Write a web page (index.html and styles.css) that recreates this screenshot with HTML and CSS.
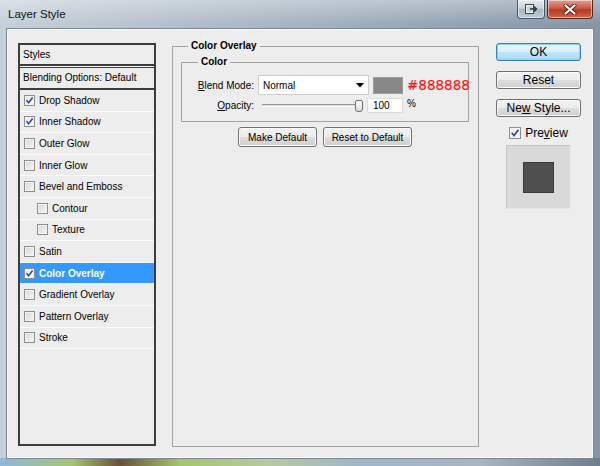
FILE: index.html
```html
<!DOCTYPE html>
<html lang="en">
<head>
    <meta charset="UTF-8">
    <title>Layer Style</title>
    <link rel="stylesheet" href="styles.css">
</head>
<body>
    <div class="window">
        <div class="title_bar">
            <div class="title">Layer Style</div>
            <div class="title_buttons">
                <div class="tb_btn">
                    <svg width="13" height="10" viewBox="0 0 13 10">
                        <rect x="0.5" y="0.5" width="8" height="9" fill="#f4f6f8" stroke="#3b4652"/>
                        <rect x="2" y="2" width="5" height="6" fill="#c9d1d9"/>
                        <path d="M5 5 H11.5 M9 2.5 L11.5 5 L9 7.5" fill="none" stroke="#2b333c" stroke-width="1.4"/>
                    </svg>
                </div>
                <div class="tb_btn tb_close">
                    <svg width="14" height="11" viewBox="0 0 14 11">
                        <path d="M2.5 1.5 L11.5 9.5 M11.5 1.5 L2.5 9.5" stroke="#5a1d12" stroke-width="4" stroke-linecap="round"/>
                        <path d="M2.5 1.5 L11.5 9.5 M11.5 1.5 L2.5 9.5" stroke="#ffffff" stroke-width="2.2" stroke-linecap="round"/>
                    </svg>
                </div>
            </div>
        </div>

        <div class="client">
            <div class="style_list">
                <div class="list_head">Styles</div>
                <div class="list_blend">Blending Options: Default</div>
                <div class="list_row"><span class="check on"><svg width="9" height="9" viewBox="0 0 9 9"><path d="M1.5 4.3 L3.6 6.8 L7.6 1.6" fill="none" stroke="#2b4c9b" stroke-width="1.6"/></svg></span>Drop Shadow</div>
                <div class="list_row"><span class="check on"><svg width="9" height="9" viewBox="0 0 9 9"><path d="M1.5 4.3 L3.6 6.8 L7.6 1.6" fill="none" stroke="#2b4c9b" stroke-width="1.6"/></svg></span>Inner Shadow</div>
                <div class="list_row"><span class="check"></span>Outer Glow</div>
                <div class="list_row"><span class="check"></span>Inner Glow</div>
                <div class="list_row"><span class="check"></span>Bevel and Emboss</div>
                <div class="list_row sub"><span class="check"></span>Contour</div>
                <div class="list_row sub"><span class="check"></span>Texture</div>
                <div class="list_row"><span class="check"></span>Satin</div>
                <div class="list_row selected"><span class="check on"><svg width="9" height="9" viewBox="0 0 9 9"><path d="M1.5 4.3 L3.6 6.8 L7.6 1.6" fill="none" stroke="#2b4c9b" stroke-width="1.6"/></svg></span>Color Overlay</div>
                <div class="list_row"><span class="check"></span>Gradient Overlay</div>
                <div class="list_row"><span class="check"></span>Pattern Overlay</div>
                <div class="list_row"><span class="check"></span>Stroke</div>
            </div>

            <fieldset class="group outer">
                <legend>Color Overlay</legend>
                <fieldset class="group inner">
                    <legend class="inner_legend">Color</legend>
                    <div class="field_row">
                        <div class="field_label"><u>B</u>lend Mode:</div>
                        <div class="select">
                            <span>Normal</span>
                            <svg width="8" height="5" viewBox="0 0 8 5"><path d="M0 0 H8 L4 4.5 Z" fill="#000"/></svg>
                        </div>
                        <div class="swatch"></div>
                        <div class="hex">#888888</div>
                    </div>
                    <div class="field_row second">
                        <div class="field_label"><u>O</u>pacity:</div>
                        <div class="slider">
                            <div class="track"></div>
                            <div class="thumb"></div>
                        </div>
                        <div class="num_input">100</div>
                        <div class="percent">%</div>
                    </div>
                </fieldset>
                <div class="default_buttons">
                    <div class="btn small make">Make Default</div>
                    <div class="btn small reset_def">Reset to Default</div>
                </div>
            </fieldset>

            <div class="side">
                <div class="btn big ok">OK</div>
                <div class="btn big">Reset</div>
                <div class="btn big"><span>Ne<u>w</u> Style...</span></div>
                <div class="preview_row">
                    <span class="check on big_check"><svg width="10" height="10" viewBox="0 0 9 9"><path d="M1.5 4.3 L3.6 6.8 L7.6 1.6" fill="none" stroke="#2b4c9b" stroke-width="1.5"/></svg></span>
                    <span>Pre<u>v</u>iew</span>
                </div>
                <div class="preview_box">
                    <div class="preview_square"></div>
                </div>
            </div>
        </div>
    </div>
</body>
</html>
```

FILE: styles.css
```css
* {
    box-sizing: border-box;
}

body {
    margin: 0;
    font-family: "Liberation Sans", Arial, sans-serif;
    font-size: 10px;
    color: #000;
}

u {
    text-decoration: underline;
    text-underline-offset: 1px;
}

.window {
    width: 600px;
    height: 466px;
    display: flex;
    flex-direction: column;
    background:
        linear-gradient(to bottom, rgba(255, 255, 255, 0.35), rgba(255, 255, 255, 0) 24px),
        linear-gradient(to right, #8fb7dc 0%, #a7c56f 12%, #6a5038 20%, #a5c66c 30%, #b7c9a0 45%, #9fb6cc 60%, #a9b5c1 80%, #6f7e8d 100%) bottom / 100% 8px no-repeat,
        linear-gradient(to right, #c6d0da, #a9b6c3 45%, #8595a6);
}

.title_bar {
    height: 29px;
    display: flex;
    padding-left: 8px;
}

.title {
    font-size: 11.5px;
    line-height: 29px;
    color: #111;
}

.title_buttons {
    margin-left: auto;
    margin-right: 7px;
    display: flex;
    gap: 2px;
    height: 19px;
}

.tb_btn {
    width: 28px;
    height: 19px;
    border: 1px solid #4a5866;
    border-top: none;
    border-radius: 0 0 4px 4px;
    background: linear-gradient(#e6ebf0, #c8d1da 45%, #aab6c2 52%, #bfcad5);
    box-shadow: inset 0 0 0 1px rgba(255, 255, 255, 0.5);
    display: flex;
    align-items: center;
    justify-content: center;
}

.tb_close {
    width: 46px;
    border-color: #5a2418;
    background: linear-gradient(#e2a092, #cd5a45 45%, #b43a22 55%, #d3664b);
}

.client {
    flex: 1;
    margin: 0 7px 8px 7px;
    background: #ededed;
    border: 1px solid #f8f8f8;
    box-shadow: 0 0 0 1px #7a8896;
    display: flex;
    align-items: flex-start;
    padding: 10px 0 0 10px;
}

/* styles list */

.style_list {
    width: 138px;
    height: 403px;
    margin-top: 3px;
    border: 2px solid #3d3d3d;
    background: #ededed;
    flex: none;
}

.list_head {
    height: 21px;
    line-height: 19px;
    padding-left: 3px;
    border-bottom: 2px solid #3d3d3d;
}

.list_blend {
    height: 24px;
    line-height: 22px;
    padding-left: 3px;
    border-top: 1px solid #fff;
    box-shadow: inset 0 1px 0 #3d3d3d;
    border-bottom: 2px solid #3d3d3d;
}

.list_row {
    height: 21.6px;
    border-bottom: 1px solid #fafafa;
    display: flex;
    align-items: center;
    padding-left: 4px;
}

.list_row.sub {
    padding-left: 17px;
}

.list_row.selected {
    background: #3399ff;
    color: #fff;
    font-weight: bold;
}

.check {
    width: 11px;
    height: 11px;
    margin-right: 4px;
    border: 1px solid #8d8e8f;
    background: linear-gradient(135deg, #d3d6da, #f7f7f7);
    box-shadow: inset 0 0 0 1px #f4f4f4;
    display: flex;
    align-items: center;
    justify-content: center;
    flex: none;
}

.check.on {
    background: linear-gradient(135deg, #e4e7ea, #fdfdfd);
}

/* color overlay group */

.group {
    margin: 0;
    border: 1px solid #a2a2a2;
    min-width: 0;
}

.group legend {
    font-weight: bold;
    line-height: 12px;
    padding: 0 3px;
    margin-left: 7px;
}

.group.outer {
    width: 307px;
    height: 407px;
    margin-left: 16px;
    padding: 0 9px 0 8px;
    flex: none;
}

.group.inner {
    margin-top: 4px;
    padding: 7px 8px 8px 8px;
}

.group .inner_legend {
    margin-left: 8px;
}

.field_row {
    display: flex;
    align-items: center;
    height: 20px;
}

.field_row > * {
    flex: none;
}

.field_row.second {
    margin-top: 3px;
    height: 15px;
}

.field_label {
    width: 64px;
    text-align: right;
}

.select {
    width: 111px;
    height: 20px;
    margin-left: 4px;
    background: #fff;
    border: 1px solid #cfcfcf;
    display: flex;
    align-items: center;
    justify-content: space-between;
    padding: 0 4px 0 4px;
}

.select span {
    padding-top: 1px;
}

.swatch {
    width: 30px;
    height: 17px;
    margin-left: 4px;
    background: #888888;
    border: 1px solid #9c9c9c;
}

.hex {
    margin-left: 4px;
    font-family: "DejaVu Sans", Verdana, sans-serif;
    font-size: 13.5px;
    color: #ff1010;
    -webkit-text-stroke: 0.12px #ff1010;
}

.slider {
    width: 105px;
    height: 15px;
    margin-left: 4px;
    padding-left: 4px;
    display: flex;
    align-items: center;
}

.track {
    flex: 1;
    height: 3px;
    background: #d6d6d6;
    border-top: 1px solid #9a9a9a;
    border-bottom: 1px solid #fff;
}

.thumb {
    width: 8px;
    height: 12px;
    margin-left: -2px;
    border: 1px solid #707070;
    border-radius: 2px 2px 3px 3px;
    background: linear-gradient(#ffffff, #dcdcdc);
    flex: none;
}

.num_input {
    width: 36px;
    height: 15px;
    margin-left: 4px;
    background: #fff;
    border: 1px solid #dcdcdc;
    padding-left: 5px;
    line-height: 14px;
}

.percent {
    margin-left: 4px;
    align-self: flex-start;
}

.default_buttons {
    margin-top: 5px;
    display: flex;
    justify-content: center;
    gap: 6px;
}

.btn {
    border: 1px solid #707070;
    border-radius: 3px;
    background: linear-gradient(#f3f3f3, #ebebeb 48%, #dddddd 52%, #cfcfcf);
    box-shadow: inset 0 0 0 1px #fbfbfb;
    display: flex;
    align-items: center;
    justify-content: center;
}

.btn.small {
    height: 20px;
}

.btn.make {
    width: 79px;
}

.btn.reset_def {
    width: 89px;
}

/* right column */

.side {
    width: 85px;
    margin-left: 17px;
    margin-top: 3px;
    display: flex;
    flex-direction: column;
    flex: none;
}

.btn.big {
    height: 18px;
    margin-bottom: 10px;
    font-size: 12px;
}

.btn.ok {
    border-color: #3c7fb1;
    background: linear-gradient(#eaf6fd, #d9f0fc 48%, #bee6fd 52%, #a7d9f5);
    box-shadow: inset 0 0 0 1px #8ed0f8;
}

.preview_row {
    height: 12px;
    display: flex;
    align-items: center;
    justify-content: center;
    font-size: 12px;
}

.big_check {
    width: 12px;
    height: 12px;
    margin-right: 4px;
}

.preview_box {
    width: 65px;
    height: 64px;
    margin: 6px auto 0 auto;
    background: #d9d9d9;
    border: 1px solid #c4c4c4;
    border-right-color: #e6e6e6;
    border-bottom-color: #e6e6e6;
    display: flex;
    align-items: center;
    justify-content: center;
}

.preview_square {
    width: 31px;
    height: 31px;
    background: #4f4f4f;
    border: 1px solid #3a3a3a;
}
```
